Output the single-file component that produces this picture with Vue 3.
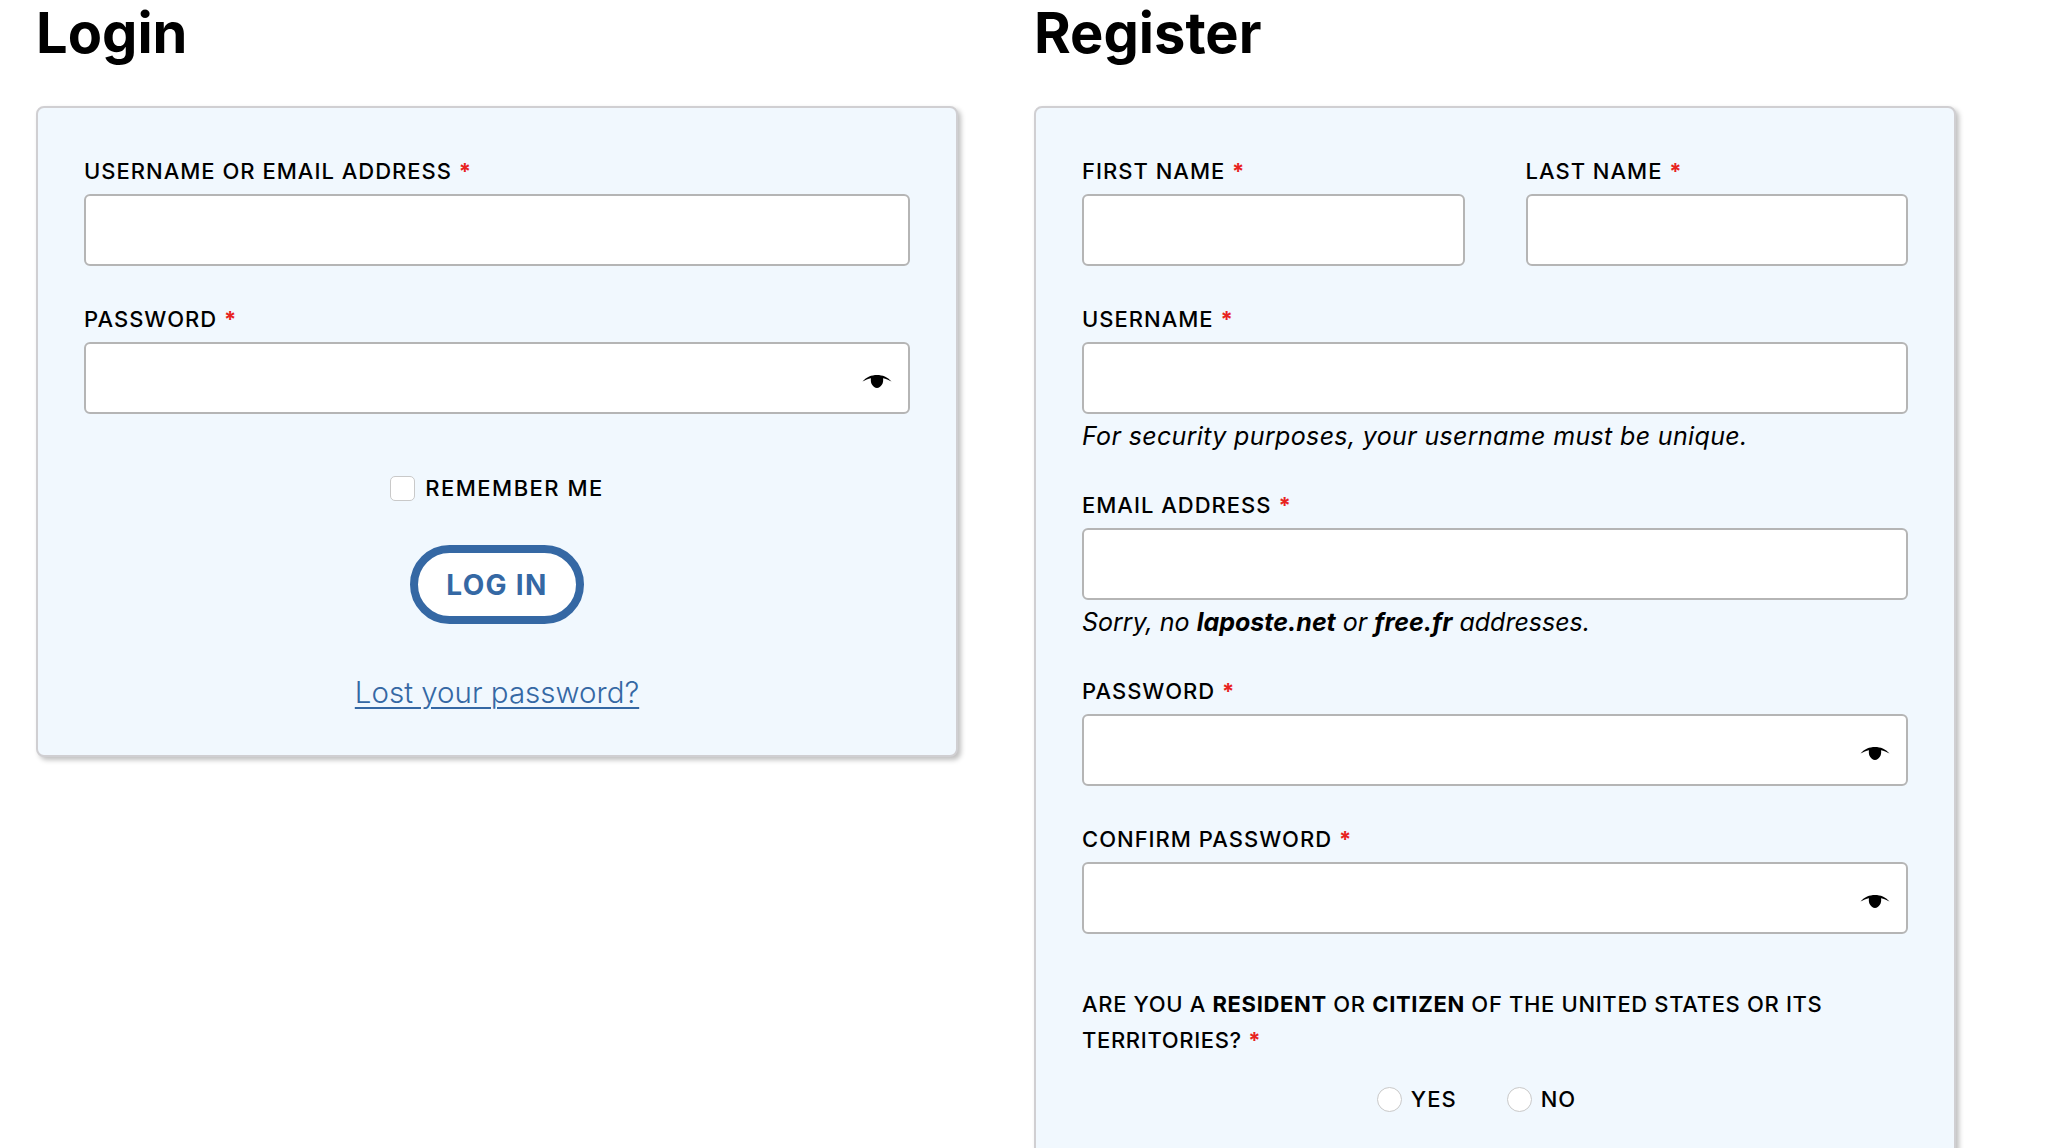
<template>
  <div class="page">
    <!-- login -->
    <section class="col">
      <h2 class="title">Login</h2>
      <form class="card" @submit.prevent>
        <div class="field">
          <label>Username or email address <span class="req">*</span></label>
          <input class="txt" type="text" />
        </div>
        <div class="field">
          <label>Password <span class="req">*</span></label>
          <div class="pw">
            <input class="txt" type="password" />
            <svg class="eye" viewBox="0 0 29 13"><path d="M0 6.500C4 2 9 0 14.500 0S25 2 29 6.500C26 5 23.500 4 20.500 3.300 21.500 8 18.500 13 14.500 13S7.500 8 8.500 3.300C5.500 4 3 5 0 6.500z" /></svg>
          </div>
        </div>
        <label class="remember"><input class="box" type="checkbox" /> Remember me</label>
        <div class="center"><button class="btn">Log in</button></div>
        <div class="center"><a class="lost" href="#">Lost your password?</a></div>
      </form>
    </section>

    <!-- register -->
    <section class="col">
      <h2 class="title">Register</h2>
      <form class="card" @submit.prevent>
        <div class="names">
          <div class="field">
            <label>First name <span class="req">*</span></label>
            <input class="txt" type="text" />
          </div>
          <div class="field">
            <label>Last name <span class="req">*</span></label>
            <input class="txt" type="text" />
          </div>
        </div>
        <div class="field">
          <label>Username <span class="req">*</span></label>
          <input class="txt" type="text" />
          <p class="hint">For security purposes, your username must be unique.</p>
        </div>
        <div class="field">
          <label>Email address <span class="req">*</span></label>
          <input class="txt" type="email" />
          <p class="hint tight">Sorry, no <b>laposte.net</b> or <b>free.fr</b> addresses.</p>
        </div>
        <div v-for="f in pwFields" :key="f" class="field">
          <label>{{ f }} <span class="req">*</span></label>
          <div class="pw">
            <input class="txt" type="password" />
            <svg class="eye" viewBox="0 0 29 13"><path d="M0 6.500C4 2 9 0 14.500 0S25 2 29 6.500C26 5 23.500 4 20.500 3.300 21.500 8 18.500 13 14.500 13S7.500 8 8.500 3.300C5.500 4 3 5 0 6.500z" /></svg>
          </div>
        </div>
        <div class="question">
          Are you a <b>resident</b> or <b>citizen</b> of the United States or its territories? <span class="req">*</span>
        </div>
        <div class="radios">
          <label><input class="dot" type="radio" name="us" /> Yes</label>
          <label><input class="dot" type="radio" name="us" /> No</label>
        </div>
      </form>
    </section>
  </div>
</template>

<script setup>
const pwFields = ['Password', 'Confirm password']
</script>

<style>
html, body { height: 100%; overflow: hidden; background: #fff; }
</style>

<style scoped>
.page { display: flex; gap: 76px; padding-left: 36px; font-family: Inter, "Liberation Sans", sans-serif; color: #000; }
.col { width: 922px; flex: none; }
.title { margin: 0; height: 106px; padding-top: 2px; box-sizing: border-box; font-size: 56px; line-height: 62px; font-weight: 700; }
.card { box-sizing: border-box; padding: 50px 46px 0; height: 651px; background: #f1f8fe; border: 2px solid #d0cfd2; border-radius: 8px; box-shadow: 3px 3px 5px rgba(0, 0, 0, .25); }
.col + .col .card { height: 1200px; }
.field { margin-bottom: 40px; }
label { display: block; font-size: 22px; line-height: 26px; font-weight: 550; text-transform: uppercase; letter-spacing: 1px; margin-bottom: 10px; }
.req { color: #e8231f; font-weight: 700; }
.txt { display: block; width: 100%; height: 72px; box-sizing: border-box; background: #fff; border: 2px solid #b5b5b5; border-radius: 6px; outline: none; }
.pw { position: relative; }
.eye { position: absolute; right: 18px; top: 33px; width: 30px; height: 13px; fill: #000; }
.hint { margin: 6px 0 0; font-size: 25px; line-height: 32px; font-style: italic; letter-spacing: .35px; }
.hint b { letter-spacing: 0; }
.hint.tight { letter-spacing: 0; }
.remember { display: flex; align-items: center; justify-content: center; gap: 10px; margin: 61px 0 0; height: 26px; letter-spacing: 1.5px; }
.box { appearance: none; width: 25px; height: 25px; margin: 0; background: #fff; border: 1px solid #c9c9c9; border-radius: 5px; }
.center { display: flex; justify-content: center; }
.btn { margin-top: 44px; width: 174px; height: 79px; box-sizing: border-box; background: #fff; border: 8px solid #3568a4; border-radius: 40px; color: #3568a4; font: 700 28px Inter, sans-serif; letter-spacing: 1.3px; text-transform: uppercase; }
.lost { margin-top: 52px; font-size: 29.5px; line-height: 32px; font-weight: 300; color: #3568a4; text-decoration: underline; text-underline-offset: 4px; text-decoration-thickness: 1.5px; }
.names { display: grid; grid-template-columns: 1fr 1fr; gap: 61px; }
.question { margin-top: 52px; font-size: 22px; line-height: 36px; font-weight: 550; text-transform: uppercase; letter-spacing: .65px; }
.question b { font-weight: 700; }
.radios { display: flex; justify-content: center; gap: 50px; margin-top: 28px; padding-right: 37px; }
.radios label { display: flex; align-items: center; gap: 9px; margin: 0; }
.dot { appearance: none; width: 25px; height: 25px; margin: 0; background: #fff; border: 1px solid #c9c9c9; border-radius: 50%; }
</style>
